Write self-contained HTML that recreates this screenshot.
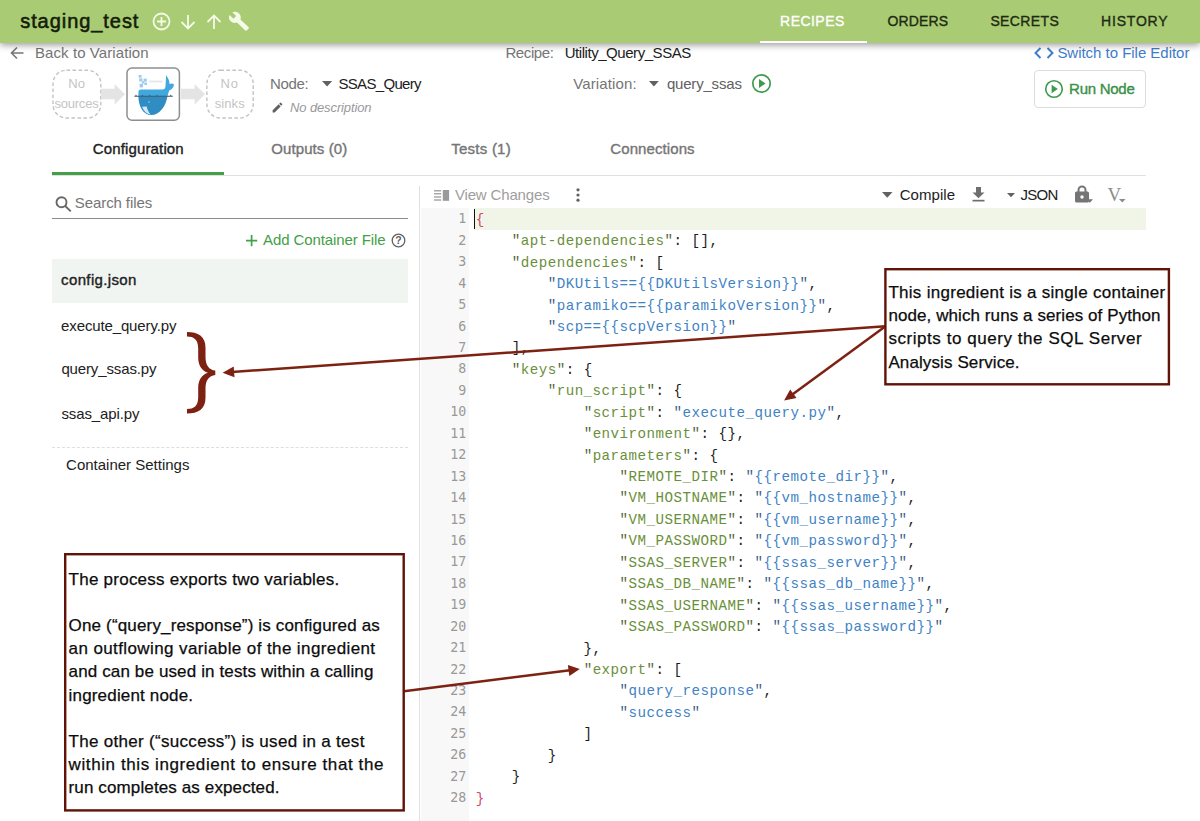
<!DOCTYPE html>
<html lang="en">
<head>
<meta charset="utf-8">
<title>staging_test</title>
<style>
*{box-sizing:border-box;margin:0;padding:0}
html,body{width:1200px;height:821px;overflow:hidden;background:#fff}
body{font-family:"Liberation Sans",sans-serif;color:#212121;position:relative}
.abs{position:absolute;white-space:nowrap}
.t{position:absolute;white-space:nowrap;line-height:1;transform-origin:0 50%}
#hdr{position:absolute;left:0;top:0;width:1200px;height:43px;background:#a8cb73;box-shadow:0 2px 7px rgba(0,0,0,.4);z-index:5}
.nav{top:13.800px;font-size:14px;color:#1f2a12;-webkit-text-stroke:.35px currentColor}
#navline{position:absolute;left:760px;top:41px;width:107px;height:2px;background:#fff}
.g{color:#757575}
.med{-webkit-text-stroke:.38px currentColor}
.code{position:absolute;left:475.700px;font:14.200px/21.44px "Liberation Mono",monospace;letter-spacing:.48px;white-space:pre;color:#1c1c1c}
.k{color:#6a8f3a}.s{color:#3f83c4}.r{color:#d0476b}
.k i{font-style:normal;color:#56683c}.s i{font-style:normal;color:#3f5f86}
.ln{position:absolute;left:421px;width:45.300px;text-align:right;font:13.300px/21.44px "DejaVu Sans Mono","Liberation Mono",monospace;color:#999}
.hand{font-family:"Liberation Sans",sans-serif;color:#0c0c0c;font-size:17px;-webkit-text-stroke:.25px currentColor}
</style>
</head>
<body>
<!-- HEADER -->
<div id="hdr">
  <div class="t med" id="title" style="left:20.2px;top:11.1px;font-size:20px;color:#141c0a;letter-spacing:0.940px;-webkit-text-stroke:.55px #141c0a">staging_test</div>
  <svg class="abs" style="left:150px;top:9px" width="104" height="26" viewBox="0 0 104 26" fill="none" stroke="#f4fbe8" stroke-width="1.8">
    <circle cx="11.5" cy="12.5" r="8"/><path d="M11.5 8v9M7 12.500h9"/>
    <path d="M38 6v13M31.500 13l6.500 6.500 6.500-6.500"/>
    <path d="M64 20V7M57.500 13l6.500-6.500 6.500 6.500"/>
    <path fill="#f4fbe8" stroke="none" transform="translate(0 -1.300) scale(1 .95)" d="M98.700 20.700l-8.300-8.300c.8-2.100.4-4.600-1.400-6.300-1.800-1.800-4.500-2.200-6.700-1.200l3.900 3.900-2.700 2.700-4-3.900c-1.100 2.200-.6 4.900 1.200 6.700 1.700 1.700 4.200 2.200 6.300 1.400l8.300 8.300c.4.400.9.400 1.300 0l2.100-2.100c.4-.3.400-1 0-1.200z"/>
  </svg>
  <div class="t nav" id="n1" style="left:780.1px;color:#fff;letter-spacing:0.455px">RECIPES</div>
  <div class="t nav" id="n2" style="left:887.4px;;letter-spacing:0.179px">ORDERS</div>
  <div class="t nav" id="n3" style="left:990.4px;;letter-spacing:0.379px">SECRETS</div>
  <div class="t nav" id="n4" style="left:1101.1px;;letter-spacing:0.794px">HISTORY</div>
  <div id="navline"></div>
</div>

<!-- ROW 2 -->
<svg class="abs" style="left:9px;top:45px" width="16" height="16" viewBox="0 0 16 16" fill="none" stroke="#757575" stroke-width="1.6"><path d="M14.500 8H2.500M8 2.500L2.500 8 8 13.500"/></svg>
<div class="t g" id="back" style="left:35.0px;top:45.1px;font-size:15px;letter-spacing:0.082px">Back to Variation</div>
<div class="t g" id="recl" style="left:505.4px;top:45.1px;font-size:15px;letter-spacing:-0.393px">Recipe:</div>
<div class="t" id="recv" style="left:564.7px;top:45.1px;font-size:15px;letter-spacing:-0.448px">Utility_Query_SSAS</div>
<svg class="abs" style="left:1034px;top:46px" width="20" height="14" viewBox="0 0 20 14" fill="none" stroke="#3d7cc9" stroke-width="1.9"><path d="M6.500 2L1.500 7l5 5M13.500 2l5 5-5 5"/></svg>
<div class="t" id="sw" style="left:1057.4px;top:45.1px;font-size:15px;color:#3d7cc9;letter-spacing:-0.027px">Switch to File Editor</div>

<!-- ROW 3: graph -->
<svg class="abs" style="left:50px;top:67px" width="54" height="54" viewBox="50 67 54 54"><rect x="53" y="70.200" width="47.800" height="47.800" rx="13.500" fill="none" stroke="#c3c3c3" stroke-width="1.400" stroke-dasharray="3.600 2.400"/></svg>
<div class="t" id="g1" style="left:68.2px;top:77px;font-size:13px;color:#c4c4c4;letter-spacing:0.275px">No</div>
<div class="t" id="g2" style="left:54.4px;top:97px;font-size:13px;color:#c4c4c4;letter-spacing:-0.205px">sources</div>
<svg class="abs" style="left:101.300px;top:82px" width="25" height="26" viewBox="0 0 25 26"><path fill="#e4e4e4" d="M0 6.800h13.600V2l10.400 10.300-10.400 10.300v-5.300H0z"/></svg>
<svg class="abs" style="left:122px;top:64px" width="62" height="60" viewBox="122 64 62 60">
  <rect x="127" y="68.100" width="52.400" height="52.200" rx="5" fill="#fff" stroke="#8e8e8e" stroke-width="1.500"/>
  <g fill="#9ccbee"><rect x="138.600" y="75" width="3" height="2.600"/><rect x="139.200" y="78.400" width="3.200" height="3"/><rect x="143.600" y="78.600" width="3.200" height="3"/><rect x="141.800" y="81.200" width="2.600" height="2.400"/><rect x="139.600" y="83.800" width="3.400" height="3.600"/><rect x="144.400" y="82.600" width="2.600" height="2.400"/></g>
  <rect x="149.200" y="80.600" width="13.400" height="1.800" fill="#e3e7ea"/>
  <path fill="#40a8df" d="M138.400 96.400V92.200Q138.400 89.600 141 89.600H162.500Q165.300 89.600 165.500 86L166.200 75Q169.300 79.500 169.700 84.300Q172 82.600 174 84.600Q173.600 88.600 169.200 90.600Q168.200 93.500 167.400 96.400Z"/>
  <path fill="#2f8dc4" d="M138.400 96.200H167.400C166.200 106 159.500 115 151.200 115C143 115 138.400 106 138.400 96.200Z"/>
  <path fill="#d6e9f3" d="M142 106.800C143.800 111.400 146.800 114 150.600 114.600C148.600 112.200 147.200 109.600 146.700 106.600Z"/>
  <path fill="#3f5566" d="M134.400 95.800H135.300L136 94.600L136.700 95.800H141.800L142.500 94.600L143.200 95.800H149.000L149.700 94.600L150.400 95.800H156.200L156.900 94.600L157.600 95.800H170.000L170.700 94.600L171.400 95.800H172.800V96.800H134.400Z"/>
  <circle cx="149" cy="102" r=".7" fill="#bfe0f2"/>
</svg>
<svg class="abs" style="left:180.500px;top:82px" width="25" height="26" viewBox="0 0 25 26"><path fill="#e4e4e4" d="M0 6.800h13.600V2l10.400 10.300-10.400 10.300v-5.300H0z"/></svg>
<svg class="abs" style="left:204px;top:67px" width="54" height="54" viewBox="204 67 54 54"><rect x="206.900" y="70.200" width="46.300" height="47.800" rx="13.500" fill="none" stroke="#c3c3c3" stroke-width="1.400" stroke-dasharray="3.600 2.400"/></svg>
<div class="t" id="g3" style="left:220.5px;top:77px;font-size:13px;color:#c4c4c4;letter-spacing:0.875px">No</div>
<div class="t" id="g4" style="left:214.8px;top:97px;font-size:13px;color:#c4c4c4;letter-spacing:0.069px">sinks</div>

<div class="t g" id="nodel" style="left:270.1px;top:75.6px;font-size:15px;letter-spacing:-0.383px">Node:</div>
<svg class="abs" style="left:321.500px;top:81.300px" width="11" height="7"><path fill="#616161" d="M0 0h10.200L5.100 5.600z"/></svg>
<div class="t" id="nodev" style="left:338.4px;top:75.6px;font-size:15px;letter-spacing:-0.669px">SSAS_Query</div>
<svg class="abs" style="left:271px;top:101px" width="13" height="13" viewBox="0 0 24 24"><path fill="#616161" d="M3 17.250V21h3.750L17.810 9.940l-3.750-3.750L3 17.250zM20.710 7.040a1 1 0 000-1.410l-2.340-2.340a1 1 0 00-1.410 0l-1.830 1.830 3.750 3.750 1.830-1.830z"/></svg>
<div class="t" id="nodesc" style="left:290.0px;color:#999;top:101.2px;font-size:13px;font-style:italic;letter-spacing:-0.116px">No description</div>

<div class="t g" id="varl" style="left:573.3px;top:75.6px;font-size:15px;letter-spacing:0.115px">Variation:</div>
<svg class="abs" style="left:648.800px;top:81.300px" width="11" height="7"><path fill="#616161" d="M0 0h9.800L4.900 5.500z"/></svg>
<div class="t" id="varv" style="left:666.9px;top:75.6px;font-size:15px;color:#616161;letter-spacing:-0.191px">query_ssas</div>
<svg class="abs" style="left:751px;top:73px" width="21" height="21" viewBox="0 0 21 21"><circle cx="10.500" cy="10.500" r="8.700" fill="none" stroke="#3f9a4f" stroke-width="1.700"/><path fill="#3f9a4f" d="M8 6l6.500 4.500L8 15z"/></svg>

<div class="abs" style="left:1034px;top:70px;width:112px;height:38px;border:1px solid #dcdcdc;border-radius:4px"></div>
<svg class="abs" style="left:1044px;top:79px" width="20" height="20" viewBox="0 0 21 21"><circle cx="10.500" cy="10.500" r="8.700" fill="none" stroke="#3f9a4f" stroke-width="1.700"/><path fill="#3f9a4f" d="M8 6l6.500 4.500L8 15z"/></svg>
<div class="t med" id="runn" style="left:1069.1px;top:81.0px;font-size:15px;color:#3a9148;letter-spacing:-0.264px">Run Node</div>

<!-- TABS -->
<div class="t med" id="tab1" style="left:92.8px;top:141.0px;font-size:15px;color:#212121;letter-spacing:0.139px">Configuration</div>
<div class="t g med" id="tab2" style="left:271.3px;top:141.0px;font-size:15px;letter-spacing:0.087px">Outputs (0)</div>
<div class="t g med" id="tab3" style="left:451.3px;top:141.0px;font-size:15px;letter-spacing:0.236px">Tests (1)</div>
<div class="t g med" id="tab4" style="left:610.3px;top:141.0px;font-size:15px;letter-spacing:0.091px">Connections</div>
<div class="abs" style="left:52px;top:175px;width:1094px;height:1px;background:#e0e0e0"></div>
<div class="abs" style="left:52px;top:172px;width:172px;height:3px;background:#43a047"></div>

<!-- LEFT PANEL -->
<svg class="abs" style="left:54px;top:195px" width="18" height="18" viewBox="0 0 18 18" fill="none" stroke="#686868" stroke-width="1.900"><circle cx="7.500" cy="7.300" r="5"/><path d="M11.200 11l5.600 5.400"/></svg>
<div class="t g" id="srch" style="left:74.8px;top:195.0px;font-size:15px;letter-spacing:-0.089px">Search files</div>
<div class="abs" style="left:52px;top:218px;width:356px;height:1px;background:#8c8c8c"></div>
<svg class="abs" style="left:245.800px;top:234.900px" width="12" height="12" viewBox="0 0 12 12" stroke="#43a047" stroke-width="1.700"><path d="M5.600 0v11.200M0 5.600h11.200"/></svg>
<div class="t" id="addc" style="left:263.1px;top:232.3px;font-size:15px;color:#43a047;letter-spacing:-0.102px">Add Container File</div>
<svg class="abs" style="left:390.800px;top:232.700px" width="15" height="15" viewBox="0 0 15 15"><circle cx="7.500" cy="7.500" r="6.300" fill="none" stroke="#616161" stroke-width="1.300"/><text x="7.500" y="11.400" font-size="10.500" font-weight="bold" font-family="Liberation Sans,sans-serif" text-anchor="middle" fill="#616161">?</text></svg>
<div class="abs" style="left:52px;top:259.300px;width:356.300px;height:43.400px;background:#f0f5f1"></div>
<div class="t med" id="f1" style="left:61.1px;top:272.1px;font-size:15px;color:#212121;letter-spacing:0.358px">config.json</div>
<div class="t" id="f2" style="left:61.1px;top:318.1px;font-size:15px;letter-spacing:-0.134px">execute_query.py</div>
<div class="t" id="f3" style="left:61.4px;top:361.4px;font-size:15px;letter-spacing:-0.135px">query_ssas.py</div>
<div class="t" id="f4" style="left:61.4px;top:405.8px;font-size:15px;letter-spacing:-0.102px">ssas_api.py</div>
<div class="abs" style="left:52px;top:447px;width:356px;height:0;border-top:1px dashed #dedede"></div>
<div class="t" id="cset" style="left:66.1px;top:457.3px;font-size:15px;letter-spacing:-0.006px">Container Settings</div>
<div class="abs" style="left:419px;top:186px;width:1px;height:635px;background:#e0e0e0"></div>

<!-- EDITOR placeholder -->
<div id="editor">
<div class="abs" style="left:420.500px;top:208.300px;width:48.700px;height:613px;background:#f8f8f8"></div>
<div class="abs" style="left:474px;top:208.300px;width:671.500px;height:21.300px;background:#f0f5e7"></div>
<div class="abs" style="left:474px;top:209px;width:1.200px;height:20px;background:#111"></div>
<pre class="ln" style="top:208.400px">1
2
3
4
5
6
7
8
9
10
11
12
13
14
15
16
17
18
19
20
21
22
23
24
25
26
27
28</pre>
<pre class="code" style="top:209.800px"><span class="r">{</span>
    <span class="k"><i>"</i>apt-dependencies<i>"</i></span>: [],
    <span class="k"><i>"</i>dependencies<i>"</i></span>: [
        <span class="s"><i>"</i>DKUtils=={{DKUtilsVersion}}<i>"</i></span>,
        <span class="s"><i>"</i>paramiko=={{paramikoVersion}}<i>"</i></span>,
        <span class="s"><i>"</i>scp=={{scpVersion}}<i>"</i></span>
    ],
    <span class="k"><i>"</i>keys<i>"</i></span>: {
        <span class="k"><i>"</i>run_script<i>"</i></span>: {
            <span class="k"><i>"</i>script<i>"</i></span>: <span class="s"><i>"</i>execute_query.py<i>"</i></span>,
            <span class="k"><i>"</i>environment<i>"</i></span>: {},
            <span class="k"><i>"</i>parameters<i>"</i></span>: {
                <span class="k"><i>"</i>REMOTE_DIR<i>"</i></span>: <span class="s"><i>"</i>{{remote_dir}}<i>"</i></span>,
                <span class="k"><i>"</i>VM_HOSTNAME<i>"</i></span>: <span class="s"><i>"</i>{{vm_hostname}}<i>"</i></span>,
                <span class="k"><i>"</i>VM_USERNAME<i>"</i></span>: <span class="s"><i>"</i>{{vm_username}}<i>"</i></span>,
                <span class="k"><i>"</i>VM_PASSWORD<i>"</i></span>: <span class="s"><i>"</i>{{vm_password}}<i>"</i></span>,
                <span class="k"><i>"</i>SSAS_SERVER<i>"</i></span>: <span class="s"><i>"</i>{{ssas_server}}<i>"</i></span>,
                <span class="k"><i>"</i>SSAS_DB_NAME<i>"</i></span>: <span class="s"><i>"</i>{{ssas_db_name}}<i>"</i></span>,
                <span class="k"><i>"</i>SSAS_USERNAME<i>"</i></span>: <span class="s"><i>"</i>{{ssas_username}}<i>"</i></span>,
                <span class="k"><i>"</i>SSAS_PASSWORD<i>"</i></span>: <span class="s"><i>"</i>{{ssas_password}}<i>"</i></span>
            },
            <span class="k"><i>"</i>export<i>"</i></span>: [
                <span class="s"><i>"</i>query_response<i>"</i></span>,
                <span class="s"><i>"</i>success<i>"</i></span>
            ]
        }
    }
<span class="r">}</span></pre>
</div>

<!-- EDITOR TOOLBAR -->
<svg class="abs" style="left:433.500px;top:189.500px" width="16" height="12" viewBox="0 0 16 12"><path fill="#a8a8a8" d="M0 0h7.200v1.500H0zM0 3.100h7.200v1.500H0zM0 6.200h7.200v1.500H0zM0 9.300h7.200v1.500H0z"/><rect x="8.800" y="0" width="6.300" height="10.800" fill="#9a9a9a"/></svg>
<div class="t" id="vch" style="left:454.9px;top:187.0px;font-size:15px;color:#9e9e9e;letter-spacing:-0.150px">View Changes</div>
<svg class="abs" style="left:575px;top:187px" width="6" height="16" viewBox="0 0 6 16" fill="#616161"><circle cx="3" cy="2.800" r="1.600"/><circle cx="3" cy="8" r="1.600"/><circle cx="3" cy="13.200" r="1.600"/></svg>
<svg class="abs" style="left:882px;top:192px" width="11" height="6"><path fill="#616161" d="M0 0h10.500L5.250 5.800z"/></svg>
<div class="t" id="cmp" style="left:899.7px;top:187.2px;font-size:15px;color:#212121;letter-spacing:0.061px">Compile</div>
<svg class="abs" style="left:972px;top:187px" width="13" height="15" viewBox="0 0 13 15" fill="#6e6e6e"><path d="M4 0h5v5.500h3.500L6.500 11.300.5 5.500H4z"/><rect x="0.500" y="12.800" width="12" height="1.700"/></svg>
<svg class="abs" style="left:1007px;top:193px" width="9" height="5"><path fill="#616161" d="M0 0h8L4 4.300z"/></svg>
<div class="t" id="jsn" style="left:1020.6px;top:187.2px;font-size:15px;color:#212121;letter-spacing:-0.739px">JSON</div>
<svg class="abs" style="left:1074px;top:185px" width="20" height="18" viewBox="0 0 20 18" fill="#757575"><path d="M3.500 7V5a4.500 4.500 0 019 0v2h-2V5a2.500 2.500 0 00-5 0v2z"/><rect x="1" y="6.600" width="14" height="10.900" rx="1.500"/><circle cx="8" cy="12" r="1.700" fill="#fff"/><path d="M12.600 14.300h6.400l-3.200 3.400z"/></svg>
<div class="t" id="vv" style="left:1107.500px;top:185px;font-size:19px;font-family:'Liberation Serif',serif;color:#8c8c8c">V</div>
<svg class="abs" style="left:1119px;top:199.300px" width="7" height="4"><path fill="#8c8c8c" d="M0 0h6.600L3.300 3.400z"/></svg>

<!-- ANNOTATIONS -->
<div id="annot">
<svg class="abs" style="left:0;top:0;z-index:8" width="1200" height="821" viewBox="0 0 1200 821" fill="none" stroke="#7d2112">
  <!-- brace -->
  <path fill="#7d2112" stroke="none" d="M187 332C198 332 205.500 336 205.500 348V357C205.500 365 209 370 215.300 370.600V375C209 375.600 205.500 380.500 205.500 388.500V397.500C205.500 409.500 198 413.500 187 413.500V409C194 409 198.200 406 198.200 397V388C198.200 380 202 374.500 208 372.800C202 371 198.200 365.500 198.200 357.500V348.500C198.200 339.500 194 336.500 187 336.500Z"/>
  <!-- arrow box1 -> brace -->
  <path d="M885.500 326.300L232 372.050" stroke-width="2.500"/>
  <path d="M222.600 372.700L233.700 366.600L234.450 377.200Z" fill="#7d2112" stroke="none"/>
  <!-- arrow box1 -> execute_query -->
  <path d="M885.500 326.300L792 394.800" stroke-width="2.500"/>
  <path d="M784.100 400.500L790.200 389.400L796.500 398Z" fill="#7d2112" stroke="none"/>
  <!-- arrow box2 -> export -->
  <path d="M404 691.300L570 670.250" stroke-width="2.500"/>
  <path d="M579.800 669L567.900 664.900L569.300 675.900Z" fill="#7d2112" stroke="none"/>
</svg>
<svg class="abs" id="boxes" style="left:0;top:0;z-index:9" width="1200" height="821" viewBox="0 0 1200 821" fill="#fff" stroke="#621307" stroke-width="2.400">
  <rect x="885.400" y="269.200" width="283.500" height="115.100"/>
  <rect x="65.200" y="554.200" width="338.500" height="256.200"/>
</svg>
<div id="b1t" style="z-index:10;position:absolute;left:0;top:0">
<div class="t hand h1" id="h1" style="left:888.4px;top:284px;letter-spacing:0.284px">This ingredient is a single container</div>
<div class="t hand h1" id="h2" style="left:888.4px;top:307.200px;letter-spacing:0.084px">node, which runs a series of Python</div>
<div class="t hand h1" id="h3" style="left:888.4px;top:330.400px;letter-spacing:0.556px">scripts to query the SQL Server</div>
<div class="t hand h1" id="h4" style="left:888.4px;top:353.600px;letter-spacing:0.110px">Analysis Service.</div>
</div>
<div id="b2t" style="z-index:10;position:absolute;left:0;top:0">
<div class="t hand h2" id="h5" style="left:68.6px;top:570.500px;letter-spacing:0.243px">The process exports two variables.</div>
<div class="t hand h2" id="h6" style="left:68.6px;top:617px;letter-spacing:0.158px">One (“query_response”) is configured as</div>
<div class="t hand h2" id="h7" style="left:68.6px;top:640.200px;letter-spacing:0.395px">an outflowing variable of the ingredient</div>
<div class="t hand h2" id="h8" style="left:68.6px;top:663.400px;letter-spacing:0.131px">and can be used in tests within a calling</div>
<div class="t hand h2" id="h9" style="left:68.6px;top:686.600px;letter-spacing:0.171px">ingredient node.</div>
<div class="t hand h2" id="h10" style="left:68.6px;top:732.800px;letter-spacing:0.300px">The other (“success”) is used in a test</div>
<div class="t hand h2" id="h11" style="left:68.6px;top:756px;letter-spacing:0.593px">within this ingredient to ensure that the</div>
<div class="t hand h2" id="h12" style="left:68.6px;top:778.500px;letter-spacing:0.120px">run completes as expected.</div>
</div>
</div>
</body>
</html>
